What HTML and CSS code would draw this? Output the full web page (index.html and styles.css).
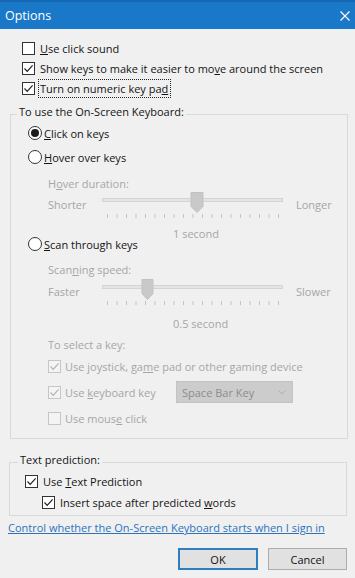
FILE: index.html
```html
<!DOCTYPE html>
<html>
<head>
<meta charset="utf-8">
<title>Options</title>
<link rel="stylesheet" href="styles.css">
</head>
<body>
<div class="dialog">
  <div class="titlebar">
    <span class="title">Options</span>
    <svg class="close" viewBox="0 0 10 10"><path d="M0.5 0.5L9.5 9.5M9.5 0.5L0.5 9.5" stroke="#fff" stroke-width="1.2" fill="none"/></svg>
  </div>

  <div class="top">
    <div class="row"><span class="cb"></span><span class="lbl"><u>U</u>se click sound</span></div>
    <div class="row"><span class="cb"><svg viewBox="0 0 11 11"><path d="M1.5 5.5L4.2 8.3L9.6 2.4" stroke="#222" stroke-width="1.2" fill="none"/></svg></span><span class="lbl">Show keys to make it easier to mo<u>v</u>e around the screen</span></div>
    <div class="row"><span class="cb"><svg viewBox="0 0 11 11"><path d="M1.5 5.5L4.2 8.3L9.6 2.4" stroke="#222" stroke-width="1.2" fill="none"/></svg></span><span class="lbl focus">Turn on numeric key pa<u>d</u></span></div>
  </div>

  <fieldset class="group g1">
    <legend>To use the On-Screen Keyboard:</legend>
    <div class="gbody g1body">
      <div class="row"><span class="rb on"></span><span class="lbl"><u>C</u>lick on keys</span></div>
      <div class="row r-hover"><span class="rb"></span><span class="lbl"><u>H</u>over over keys</span></div>
      <div class="row sub dis r-dur">H<u>o</u>ver duration:</div>
      <div class="row sub dis r-slider">
        <span class="s-left">Shorter</span>
        <svg class="slider" viewBox="0 0 181 28" width="181" height="28">
          <rect x="0.5" y="6.5" width="180" height="3" fill="#e4e4e4" stroke="#d4d4d4"/>
          <g stroke="#c4c4c4" stroke-width="1">
            <path d="M5.5 22v4M15 22v4M24.5 22v4M34 22v4M43.5 22v4M53 22v4M62.5 22v4M72 22v4M81.5 22v4M91 22v4M100.5 22v4M110 22v4M119.5 22v4M129 22v4M138.5 22v4M148 22v4M157.5 22v4M167 22v4M176.5 22v4"/>
          </g>
          <path d="M89 0.5H101V14.5L95 20.5L89 14.5Z" fill="#c9c9c9" stroke="#c2c2c2"/>
        </svg>
        <span class="s-right">Longer</span>
      </div>
      <div class="row sub dis caption r-cap1">1 second</div>
      <div class="row r-scan"><span class="rb"></span><span class="lbl"><u>S</u>can through keys</span></div>
      <div class="row sub dis r-speed">Scan<u>n</u>ing speed:</div>
      <div class="row sub dis r-slider2">
        <span class="s-left">Faster</span>
        <svg class="slider" viewBox="0 0 181 28" width="181" height="28">
          <rect x="0.5" y="6.5" width="180" height="3" fill="#e4e4e4" stroke="#d4d4d4"/>
          <g stroke="#c4c4c4" stroke-width="1">
            <path d="M5.5 22v4M15 22v4M24.5 22v4M34 22v4M43.5 22v4M53 22v4M62.5 22v4M72 22v4M81.5 22v4M91 22v4M100.5 22v4M110 22v4M119.5 22v4M129 22v4M138.5 22v4M148 22v4M157.5 22v4M167 22v4M176.5 22v4"/>
          </g>
          <path d="M40 0.5H51V14.5L45.5 20.5L40 14.5Z" fill="#c9c9c9" stroke="#c2c2c2"/>
        </svg>
        <span class="s-right">Slower</span>
      </div>
      <div class="row sub dis caption r-cap2">0.5 second</div>
      <div class="row sub dis r-select">To select a key:</div>
      <div class="row sub dis r-joy"><span class="cb off"><svg viewBox="0 0 11 11"><path d="M1.5 5.5L4.2 8.3L9.6 2.4" stroke="#b4b4b4" stroke-width="1.2" fill="none"/></svg></span><span class="lbl">Use joystick, ga<u>m</u>e pad or other gaming device</span></div>
      <div class="row sub dis r-key">
        <span class="keylabel"><span class="cb off"><svg viewBox="0 0 11 11"><path d="M1.5 5.5L4.2 8.3L9.6 2.4" stroke="#b4b4b4" stroke-width="1.2" fill="none"/></svg></span><span class="lbl">Use <u>k</u>eyboard key</span></span>
        <span class="combo"><span>Space Bar Key</span><svg viewBox="0 0 8 5" width="8" height="5"><path d="M0.5 0.5L4 4L7.5 0.5" stroke="#b0b0b0" fill="none"/></svg></span>
      </div>
      <div class="row sub dis r-key"><span class="cb off"></span><span class="lbl">Use mous<u>e</u> click</span></div>
    </div>
  </fieldset>

  <fieldset class="group g2">
    <legend>Text prediction:</legend>
    <div class="gbody g2body">
      <div class="row"><span class="cb"><svg viewBox="0 0 11 11"><path d="M1.5 5.5L4.2 8.3L9.6 2.4" stroke="#222" stroke-width="1.2" fill="none"/></svg></span><span class="lbl">Use <u>T</u>ext Prediction</span></div>
      <div class="row r-space"><span class="cb"><svg viewBox="0 0 11 11"><path d="M1.5 5.5L4.2 8.3L9.6 2.4" stroke="#222" stroke-width="1.2" fill="none"/></svg></span><span class="lbl">Insert space after predicted <u>w</u>ords</span></div>
    </div>
  </fieldset>

  <div class="linkrow"><a class="link" href="#">Control whether the On-Screen Keyboard starts when I sign in</a></div>

  <div class="buttons">
    <button class="btn default">OK</button>
    <button class="btn">Cancel</button>
  </div>
</div>
</body>
</html>
```

FILE: styles.css
```css
html, body {
  margin: 0;
  padding: 0;
}
body {
  width: 355px;
  height: 578px;
  overflow: hidden;
  background: #f0f0f0;
  font-family: "Open Sans", "Noto Sans", sans-serif;
  font-size: 11px;
  color: #141414;
}
.dialog {
  width: 355px;
  height: 578px;
}
.titlebar {
  height: 29px;
  box-sizing: border-box;
  background: #1a78c8;
  border-top: 2px solid #1668b4;
  display: flex;
  align-items: center;
  justify-content: space-between;
  padding: 0 5px 0 5px;
  color: #fff;
  font-size: 12.5px;
}
.close {
  width: 10px;
  height: 10px;
}
.top {
  padding: 9px 0 0 22px;
}
.row {
  display: flex;
  align-items: center;
  height: 18px;
  white-space: nowrap;
}
.top .row {
  height: 20px;
}
.cb {
  width: 13px;
  height: 13px;
  box-sizing: border-box;
  border: 1px solid #333;
  background: #fff;
  flex: none;
  margin-right: 5px;
  display: flex;
  align-items: center;
  justify-content: center;
}
.cb svg {
  width: 11px;
  height: 11px;
}
.cb.off {
  border-color: #c6c6c6;
  background: #f4f4f4;
  margin-right: 4px;
}
.rb {
  width: 14px;
  height: 14px;
  box-sizing: border-box;
  border: 1px solid #333;
  border-radius: 50%;
  background: #fff;
  flex: none;
  margin-right: 2px;
  display: flex;
  align-items: center;
  justify-content: center;
}
.rb.on::after {
  content: "";
  width: 8px;
  height: 8px;
  border-radius: 50%;
  background: #1b1b1b;
}
.focus {
  outline: 1px dotted #222;
  outline-offset: 1px;
  padding: 0 1px 0 0;
}
u {
  text-decoration-thickness: 1px;
  text-underline-offset: 1px;
}

.group {
  margin: 6px 7px 0 10px;
  padding: 0;
  border: 1px solid #d9d9d9;
  min-width: 0;
}
.group legend {
  margin-left: 6px;
  padding: 0 2px 4px 2px;
  font-size: 11px;
  line-height: 16px;
}
.g1body {
  padding: 0 0 11px 17px;
}
.sub {
  margin-left: 20px;
}
.dis {
  color: #a6a6a6;
}
.r-hover { margin-top: 6px; }
.r-dur { margin-top: 8px; }
.r-slider { margin-top: 4px; align-items: flex-start; }
.r-cap1 { margin-top: 10px; }
.r-scan { margin-top: -7px; }
.r-speed { margin-top: 7px; }
.r-slider2 { margin-top: 5px; align-items: flex-start; }
.r-cap2 { margin-top: 13px; }
.r-select { margin-top: 3px; }
.r-joy { margin-top: 4px; }
.r-key { margin-top: 8px; }

.r-slider .s-left, .r-slider2 .s-left,
.r-slider .s-right, .r-slider2 .s-right {
  line-height: 18px;
}
.s-left {
  width: 54px;
  flex: none;
}
.slider {
  flex: none;
  margin-top: -4px;
}
.s-right {
  margin-left: 13px;
}
.caption {
  padding-left: 125px;
}
.keylabel {
  display: flex;
  align-items: center;
  width: 128px;
  flex: none;
}
.combo {
  width: 117px;
  height: 22px;
  box-sizing: border-box;
  background: #cccccc;
  border: 1px solid #c4c4c4;
  display: flex;
  align-items: center;
  justify-content: space-between;
  padding: 0 6px 0 5px;
  color: #8c8c8c;
}

.g2 {
  margin: 13px 8px 0 9px;
}
.g2 legend {
  margin-left: 8px;
}
.g2body {
  padding: 0 0 4px 15px;
}
.r-space {
  margin-top: 3px;
  margin-left: 17px;
}

.linkrow {
  margin: 3px 0 0 8px;
  height: 18px;
  line-height: 18px;
}
.link {
  color: #2b73bd;
  text-decoration: underline;
  text-decoration-thickness: 1px;
}
.buttons {
  display: flex;
  justify-content: flex-end;
  gap: 10px;
  margin-top: 11px;
  padding-right: 8px;
}
.btn {
  width: 79px;
  height: 22px;
  box-sizing: border-box;
  background: #e1e1e1;
  border: 1px solid #adadad;
  font-family: inherit;
  font-size: 11px;
  color: #111;
  padding: 0;
}
.btn.default {
  width: 80px;
  border: 2px solid #2f7fc0;
}
```
